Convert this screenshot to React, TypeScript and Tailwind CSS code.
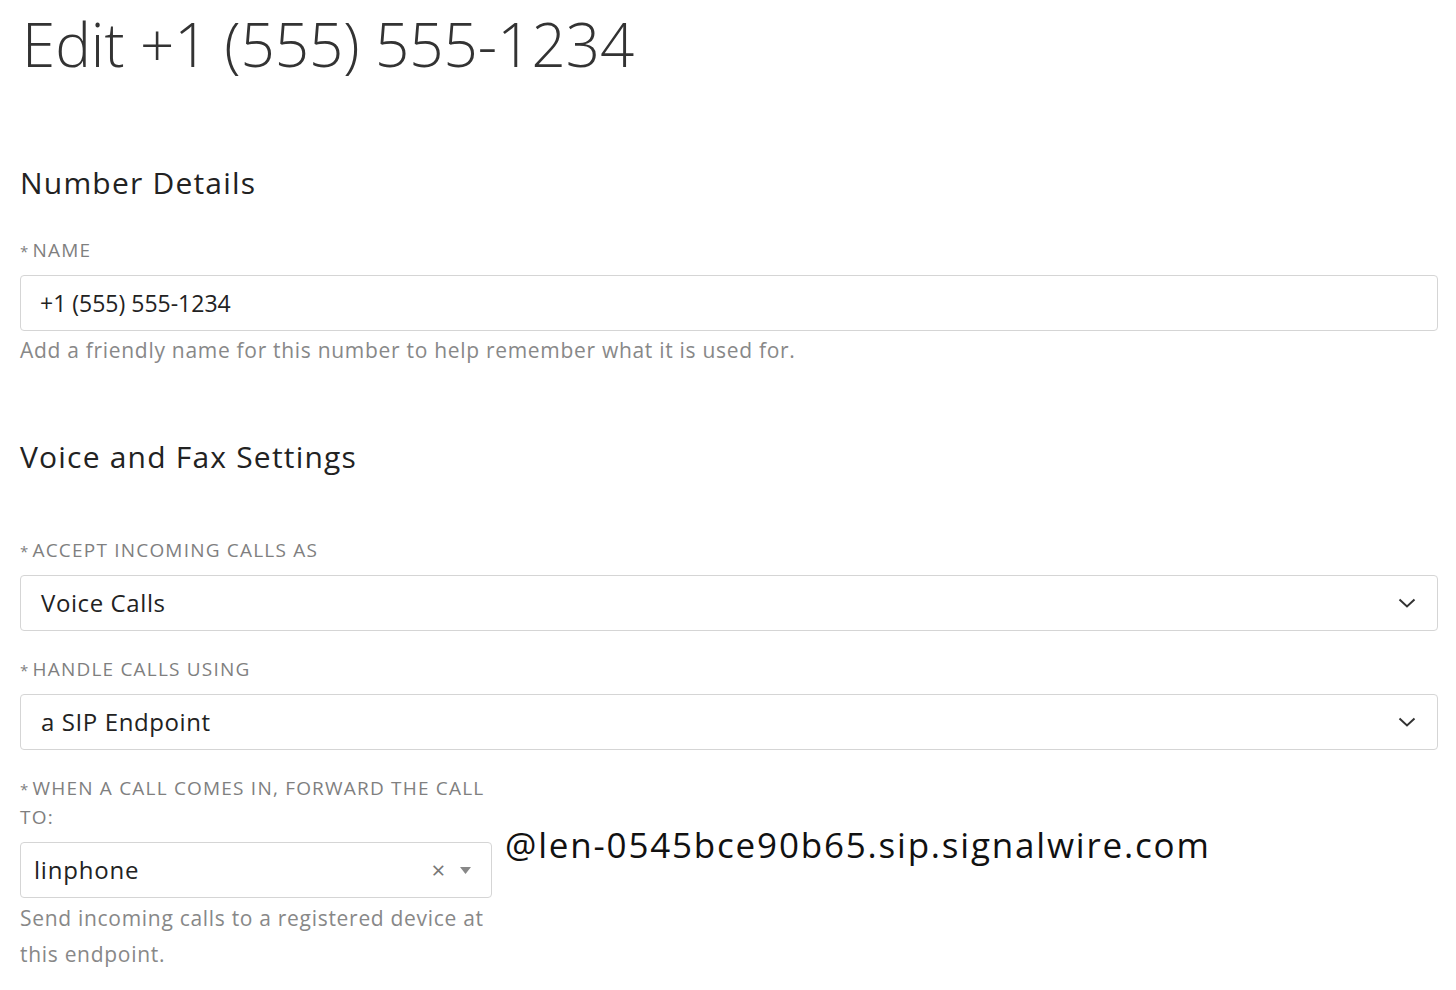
const font = { fontFamily: '"Open Sans", "Noto Sans", sans-serif' };

function Star() {
  return <span className="mr-[3px] align-baseline text-[15px] leading-none">*</span>;
}

function Label({ text, top }: { text: string; top: string }) {
  return (
    <div className={`${top} h-[28px] text-[19px] leading-[28px] tracking-[1.2px] uppercase text-[#7f7f7f]`}>
      <Star />
      {text}
    </div>
  );
}

function Chevron() {
  return (
    <svg width="18" height="10" viewBox="0 0 18 10" className="shrink-0">
      <polyline points="1.5,1.5 9,8.5 16.5,1.5" fill="none" stroke="#333" strokeWidth="2" />
    </svg>
  );
}

function SelectBox({ value }: { value: string }) {
  return (
    <div className="mt-[11px] h-[56px] flex items-center justify-between rounded-[4px] border border-[#d5d5d5] pl-[20px] pr-[21px] text-[24px] tracking-[0.6px] text-[#222]">
      <span>{value}</span>
      <Chevron />
    </div>
  );
}

export default function App() {
  return (
    <div className="min-h-screen bg-white pl-[20px] pr-[18px]" style={font}>
      <h1 className="h-[90px] pl-[2px] text-[60px] font-light leading-[88px] text-[#333]">
        Edit +1 (555) 555-1234
      </h1>

      <h2 className="mt-[70px] h-[46px] text-[30px] leading-[46px] tracking-[1.2px] text-[#222]">
        Number Details
      </h2>
      <Label top="mt-[30px]" text="Name" />
      <div className="mt-[11px] h-[56px] flex items-center rounded-[4px] border border-[#d5d5d5] px-[19px] text-[23px] text-[#222]">
        +1 (555) 555-1234
      </div>
      <p className="mt-[5px] h-[28px] text-[21px] leading-[28px] tracking-[0.7px] text-[#888]">
        Add a friendly name for this number to help remember what it is used for.
      </p>

      <h2 className="mt-[70px] h-[46px] text-[30px] leading-[46px] tracking-[1.2px] text-[#222]">
        Voice and Fax Settings
      </h2>
      <Label top="mt-[56px]" text="Accept incoming calls as" />
      <SelectBox value="Voice Calls" />
      <Label top="mt-[24px]" text="Handle calls using" />
      <SelectBox value="a SIP Endpoint" />

      <div className="flex gap-[13px]">
        <div className="w-[472px] shrink-0">
          <div className="mt-[24px] text-[19px] leading-[29px] tracking-[1.2px] uppercase text-[#7f7f7f]">
            <Star />
            When a call comes in, forward the call to:
          </div>
          <div className="mt-[10px] h-[56px] flex items-center rounded-[4px] border border-[#d5d5d5] pl-[13px] pr-[20px] text-[24px] tracking-[0.8px] text-[#222]">
            <span className="flex-1">linphone</span>
            <span className="mr-[14px] text-[24px] leading-none text-[#777]">×</span>
            <svg width="11" height="7" viewBox="0 0 11 7">
              <polygon points="0,0 11,0 5.5,7" fill="#888" />
            </svg>
          </div>
          <p className="mt-[2px] text-[21px] leading-[36px] tracking-[0.7px] text-[#888]">
            Send incoming calls to a registered device at this endpoint.
          </p>
        </div>
        <div className="pt-[73px] text-[35px] leading-[44px] tracking-[1.8px] text-[#111]">
          @len-0545bce90b65.sip.signalwire.com
        </div>
      </div>
    </div>
  );
}
